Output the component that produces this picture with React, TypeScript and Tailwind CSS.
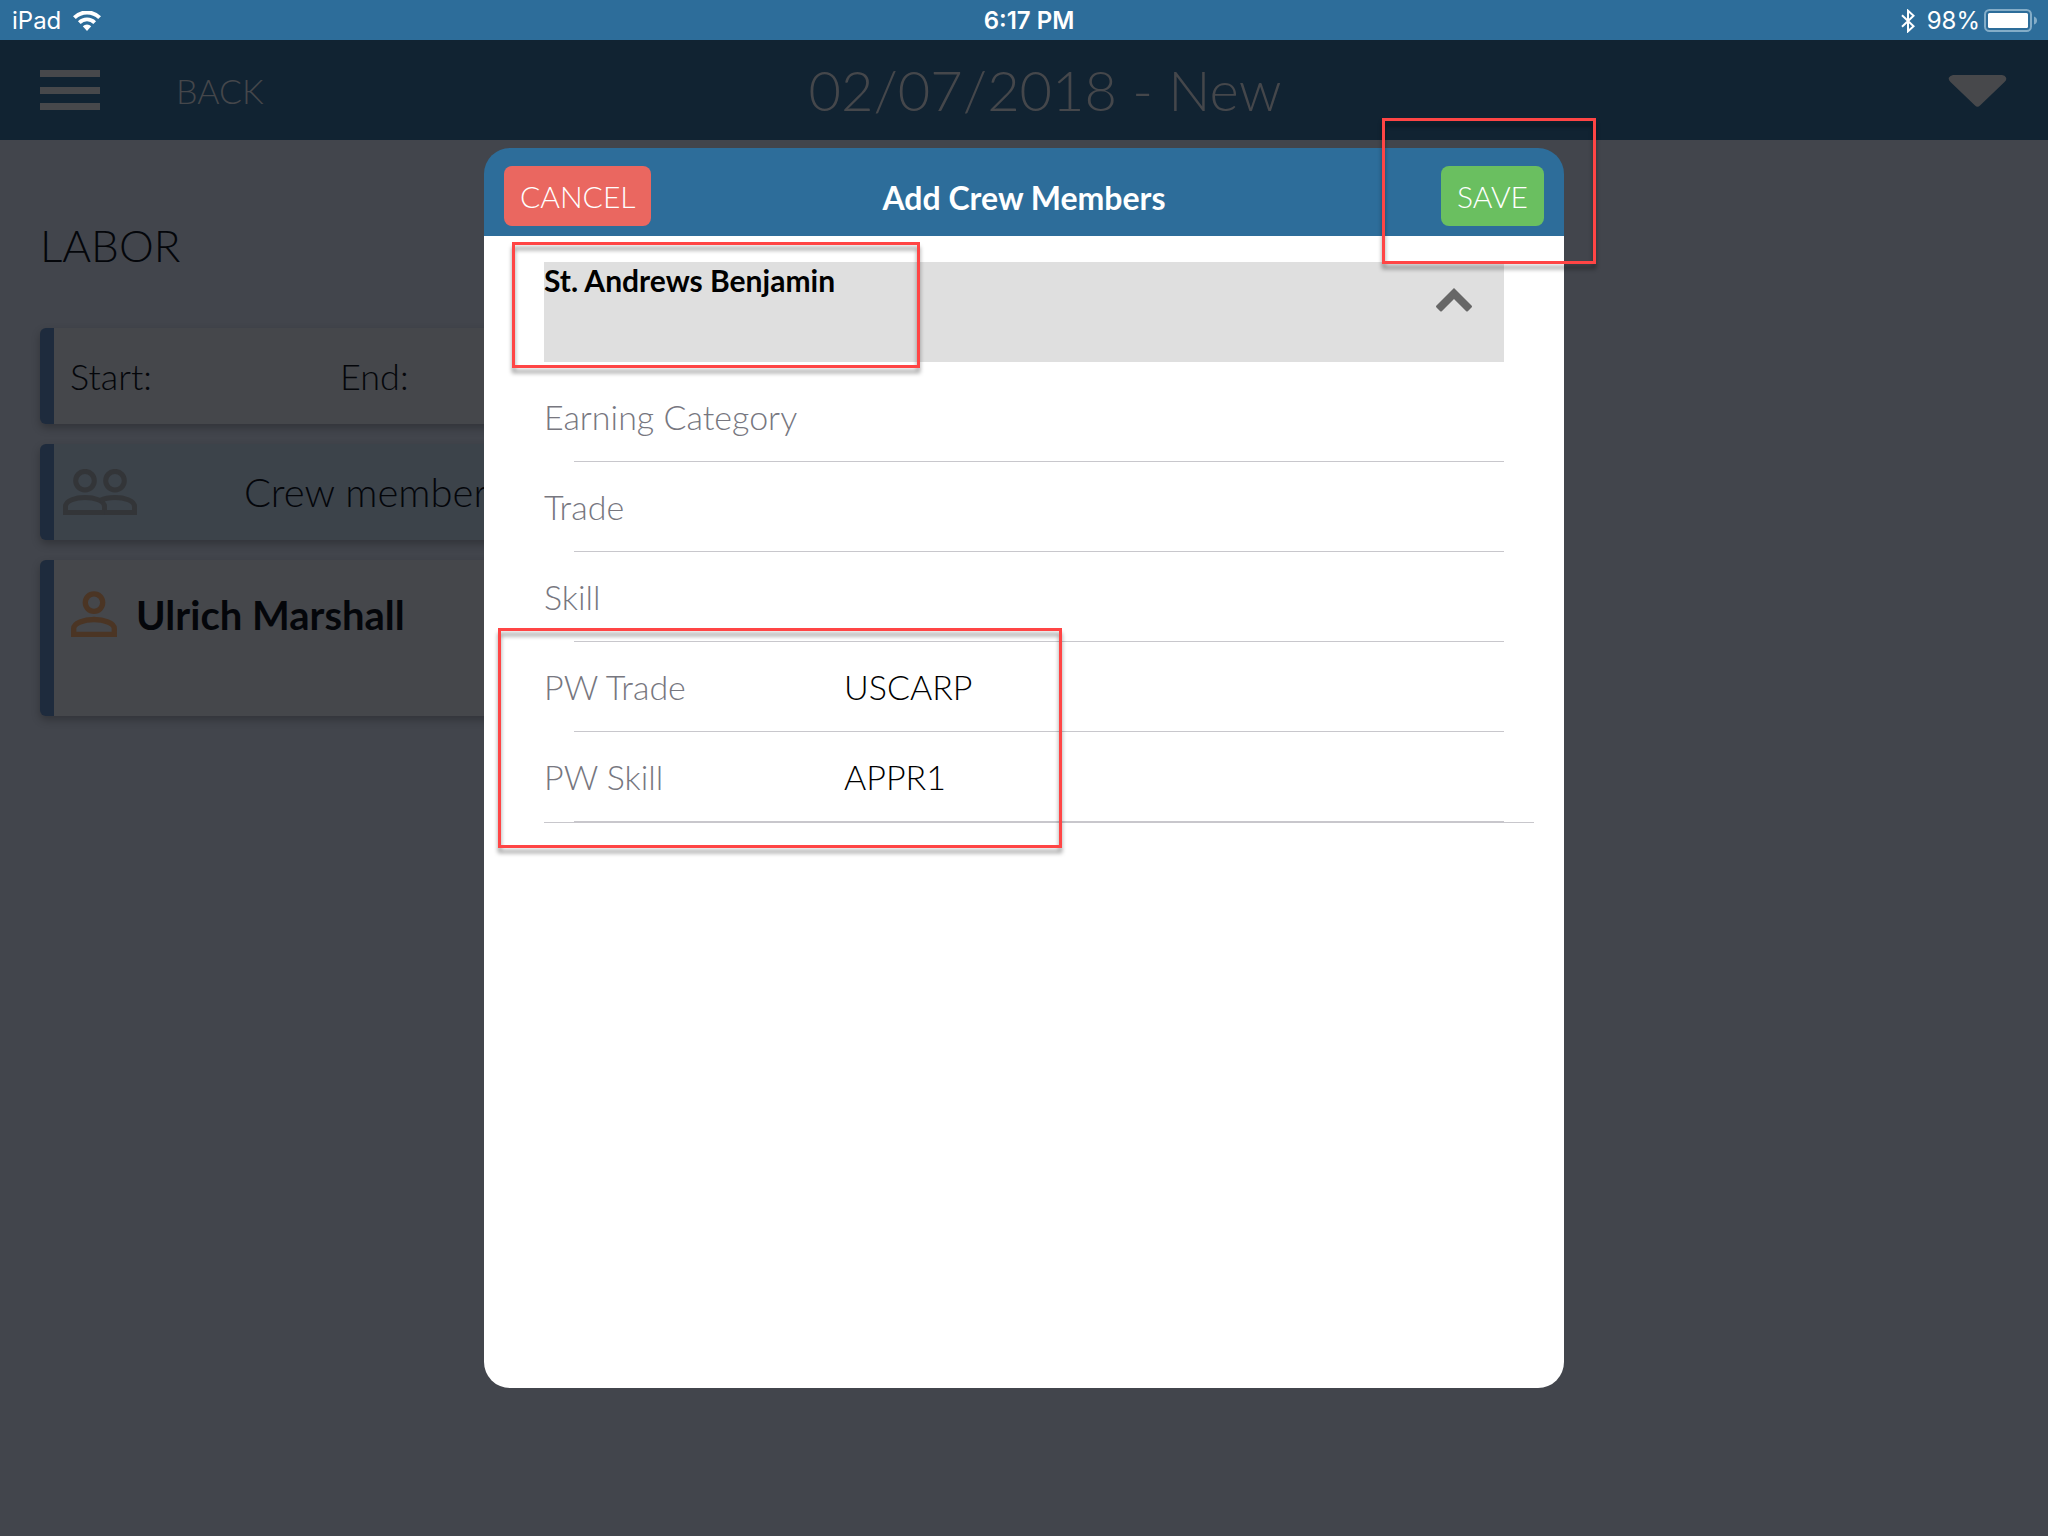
import type { ReactNode } from "react";

const fields = [
  { id: "earning-category", label: "Earning Category", value: "" },
  { id: "trade", label: "Trade", value: "" },
  { id: "skill", label: "Skill", value: "" },
  { id: "pw-trade", label: "PW Trade", value: "USCARP" },
  { id: "pw-skill", label: "PW Skill", value: "APPR1" },
];

function WifiIcon() {
  return (
    <svg width="28" height="20" viewBox="0 0 28 20" fill="none" aria-hidden="true">
      <path d="M1.4 6.6A18 18 0 0 1 26.6 6.6" stroke="#fff" strokeWidth="4" />
      <path d="M6.3 11.6A11 11 0 0 1 21.7 11.6" stroke="#fff" strokeWidth="3.8" />
      <path d="M9.8 15.2A6 6 0 0 1 18.2 15.2L14 20Z" fill="#fff" />
    </svg>
  );
}

function BluetoothIcon() {
  return (
    <svg width="14" height="24" viewBox="0 0 14 24" fill="none" stroke="#fff" strokeWidth="2" aria-hidden="true">
      <path d="M1 6.2L12.6 17.2L7 22.3V1.7L12.6 6.8L1 17.8" />
    </svg>
  );
}

function BatteryIcon() {
  return (
    <svg width="54" height="23" viewBox="0 0 54 23" fill="none" aria-hidden="true">
      <rect x="1" y="1" width="46" height="21" rx="4.5" stroke="#84adc8" strokeWidth="2" />
      <rect x="4" y="4" width="40" height="15" rx="1.5" fill="#fff" />
      <path d="M50 7.5Q53 8.5 53 11.5T50 15.5Z" fill="#84adc8" />
    </svg>
  );
}

function PeopleIcon() {
  return (
    <svg width="74" height="46" viewBox="63 469 74 46" fill="none" stroke="#333538" strokeWidth="5" aria-hidden="true">
      <circle cx="85" cy="480.7" r="9.3" />
      <circle cx="115" cy="480.7" r="9.3" />
      <path d="M65.5 512.5V506.5C65.5 500.5 76 497.5 85 497.5S104.5 500.5 104.5 506.5V512.5Z" />
      <path d="M100 500.5C104 498.6 109.5 497.5 115 497.5C124 497.5 134.5 500.5 134.5 506.5V512.5H104.5" />
    </svg>
  );
}

function PersonIcon() {
  return (
    <svg width="46" height="46" viewBox="71 591 46 46" fill="none" stroke="#4b3524" strokeWidth="5.3" aria-hidden="true">
      <circle cx="94" cy="602.6" r="8.7" />
      <path d="M73.7 634.3V628.5C73.7 623 84 619.5 94 619.5S114.3 623 114.3 628.5V634.3Z" />
    </svg>
  );
}

function Card({ className, children }: { className: string; children: ReactNode }) {
  return (
    <div className={`flex rounded-md border-l-[14px] border-[#1e2b3d] shadow-[0_4px_8px_rgba(0,0,0,0.25)] ${className}`}>
      {children}
    </div>
  );
}

function Highlight({ className }: { className: string }) {
  return (
    <div
      aria-hidden="true"
      className={`pointer-events-none absolute border-3 border-[#ff4545] drop-shadow-[0_5px_2px_rgba(0,0,0,0.4)] ${className}`}
    />
  );
}

export default function App() {
  return (
    <div className="relative flex min-h-screen flex-col bg-[#42454c] font-['Lato',sans-serif] font-light">
      <div className="grid h-10 grid-cols-[1fr_auto_1fr] items-center bg-[#2d6d9a] pt-px pr-[10px] pl-3 font-['Inter',sans-serif] text-2xl font-normal text-white">
        <div className="flex items-center gap-3">
          <span>iPad</span>
          <WifiIcon />
        </div>
        <div className="pl-2 text-center font-semibold">6:17 PM</div>
        <div className="flex items-center justify-end">
          <BluetoothIcon />
          <span className="pr-1 pl-3">98%</span>
          <BatteryIcon />
        </div>
      </div>

      <header className="grid h-[100px] grid-cols-[1fr_auto_1fr] items-center bg-[#112332] px-10 text-[#45474b]">
        <div className="flex items-center gap-[76px]">
          <button type="button" aria-label="Menu" className="flex h-10 w-[60px] flex-col justify-between">
            <span className="h-[7px] bg-[#47484b]" />
            <span className="h-[7px] bg-[#47484b]" />
            <span className="h-[7px] bg-[#47484b]" />
          </button>
          <button type="button" className="text-[34px]">BACK</button>
        </div>
        <h1 className="pl-[42px] text-[56px] font-light">02/07/2018 - New</h1>
        <button type="button" aria-label="Options" className="justify-self-end">
          <svg width="60" height="34" viewBox="1 -2 60 34" fill="#47484b" aria-hidden="true">
            <path d="M6 0H55Q58 0 59 2.5T57.5 7L33 30.5Q30.5 33 28 30.5L3.5 7Q1 4.5 2 2.5T6 0Z" />
          </svg>
        </button>
      </header>

      <main className="flex w-1/2 flex-col px-10 text-[#04060a]">
        <h2 className="pt-[78px] pb-14 text-[44px] leading-[54px]">LABOR</h2>
        <div className="flex flex-col gap-5">
          <Card className="h-24 items-center bg-[#45474b] pl-4 text-4xl">
            <span className="w-[270px]">Start:</span>
            <span>End:</span>
          </Card>
          <Card className="h-24 items-center bg-[#3c434a] pl-[9px] text-[40px]">
            <PeopleIcon />
            <span className="pl-[107px]">Crew members</span>
          </Card>
          <Card className="h-[156px] items-start gap-[19px] bg-[#45474b] pt-[31px] pl-[17px] text-[40px] leading-[48px] font-bold">
            <PersonIcon />
            <span>Ulrich Marshall</span>
          </Card>
        </div>
      </main>

      <div className="absolute inset-0 flex items-center justify-center">
        <div role="dialog" aria-labelledby="dialog-title" className="relative h-[1240px] max-h-full w-full max-w-[1080px]">
          <div className="flex h-full flex-col">
            <div className="grid h-[88px] grid-cols-[1fr_auto_1fr] items-center rounded-t-[26px] bg-[#2d6d9a] px-5 pt-2 text-white">
              <button type="button" className="h-15 justify-self-start rounded-lg bg-[#ea6760] px-4 text-3xl">
                CANCEL
              </button>
              <h2 id="dialog-title" className="pt-1 text-[32px] font-bold">Add Crew Members</h2>
              <button type="button" className="h-15 justify-self-end rounded-lg bg-[#6abf60] px-4 text-3xl">
                SAVE
              </button>
            </div>
            <div className="flex-1 rounded-b-[26px] bg-white pt-[26px] pr-[30px] pl-[60px]">
              <button
                type="button"
                aria-expanded="true"
                className="mb-[10px] flex h-[100px] w-[960px] items-start justify-between bg-[#dfdfdf] pr-8 text-left text-3xl font-bold text-black"
              >
                <span>St. Andrews Benjamin</span>
                <svg className="mt-[26px]" width="36" height="24" viewBox="0 0 36 24" fill="#676767" aria-hidden="true">
                  <path d="M18 0L35.5 17.5Q36.5 18.5 35.5 19.5L32 23Q31 24 30 23L18 11L6 23Q5 24 4 23L0.5 19.5Q-0.5 18.5 0.5 17.5Z" />
                </svg>
              </button>
              <div className="border-b border-[#c8c7cc] pr-[30px]">
                {fields.map((f) => (
                  <div key={f.id}>
                    <div className="flex h-[89px] items-center text-[34px]">
                      <label htmlFor={f.id} className="w-[300px] text-[#77777f]">
                        {f.label}
                      </label>
                      <input id={f.id} defaultValue={f.value} className="min-w-0 flex-1 bg-transparent text-black outline-none" />
                    </div>
                    <div className="ml-[30px] h-px bg-[#c8c7cc]" />
                  </div>
                ))}
              </div>
            </div>
          </div>
          <Highlight className="top-[94px] left-7 h-[126px] w-[408px]" />
          <Highlight className="top-[480px] left-[14px] h-[220px] w-[564px]" />
          <Highlight className="-top-[30px] -right-8 h-[146px] w-[214px]" />
        </div>
      </div>
    </div>
  );
}
